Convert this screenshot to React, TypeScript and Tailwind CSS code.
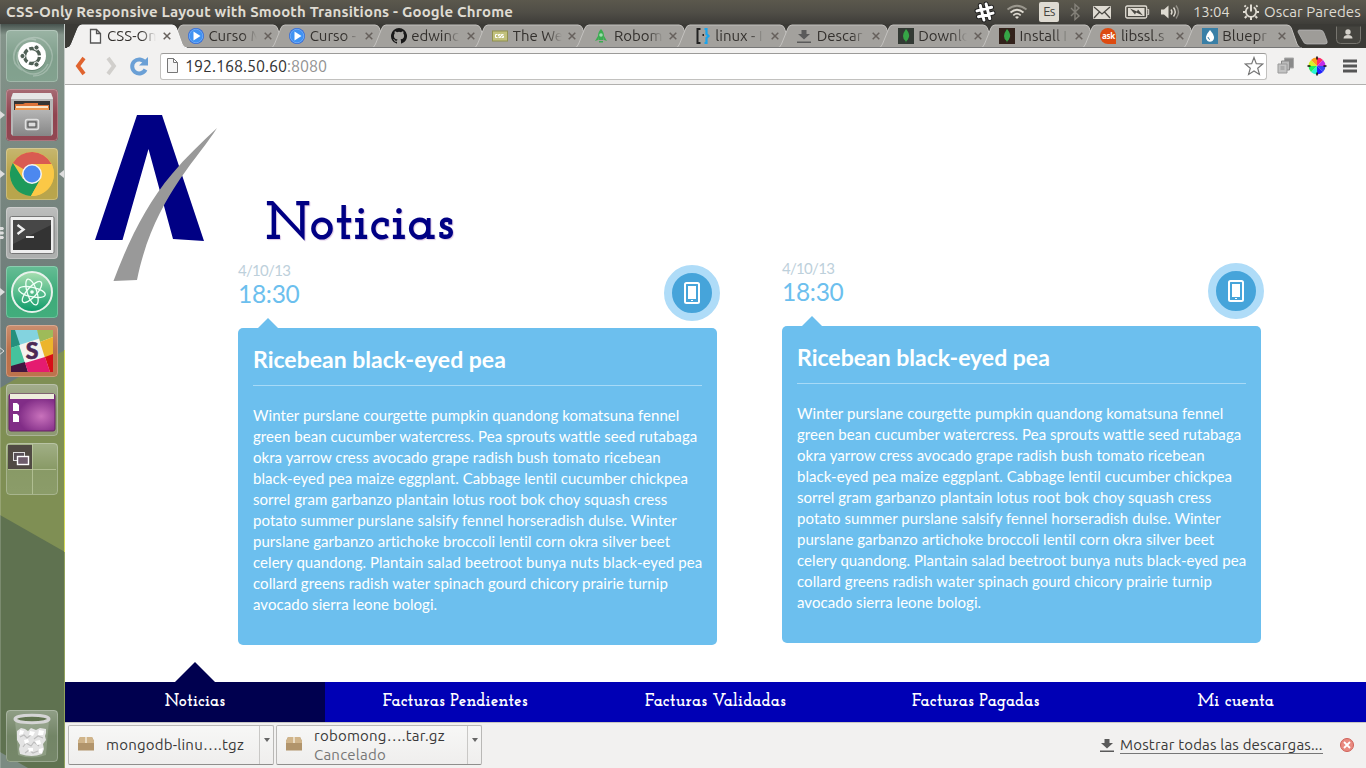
import React from "react";

const ui = "font-['Ubuntu','Noto_Sans',sans-serif]";
const slab = "font-['Josefin_Slab','Liberation_Serif',serif]";

/* ---------- system bar ---------- */

function SystemBar() {
  return (
    <header className="flex h-6 shrink-0 items-center justify-between bg-linear-to-b from-[#5b584d] via-[#504e47] to-[#3e3d39] px-[6px] text-[#dfdbd2]">
      <span className="whitespace-nowrap text-[15px] leading-6 font-bold tracking-[0.17px]">
        CSS-Only Responsive Layout with Smooth Transitions - Google Chrome
      </span>
      <div className="-mr-[3px] flex items-center">
        <svg width="22" height="22" viewBox="0 0 22 22" className="mr-[10px]">
          <g fill="none" strokeLinecap="round" transform="rotate(-14 11 11)">
            <path d="M8 3.500v15M14 3.500v15M3.500 8h15M3.500 14h15" stroke="#222" strokeWidth="5" />
            <path d="M8 3.500v15M14 3.500v15M3.500 8h15M3.500 14h15" stroke="#fff" strokeWidth="3" />
          </g>
        </svg>
        <svg width="22" height="16" viewBox="0 0 22 16" className="mr-[11px]" fill="none" stroke="#dfdbd2" strokeWidth="1.700">
          <path d="M1.500 5.500Q11-2 20.500 5.500" opacity=".5" />
          <path d="M4.500 8.500Q11 3 17.500 8.500M7.300 11.300Q11 8 14.700 11.300" />
          <path d="m11 15-2-2q2-1.500 4 0z" fill="#dfdbd2" stroke="none" />
        </svg>
        <span className="mr-[10px] flex h-5 w-5 items-center justify-center rounded-[2px] bg-[#dfdbd2] text-[13px] tracking-[-0.6px] text-[#45443f]">
          Es
        </span>
        <svg width="12" height="18" viewBox="0 0 12 18" className="mr-[12px]" fill="none" stroke="#85827a" strokeWidth="1.400">
          <path d="m2 5 8 8-4 3.500V1.500L10 5l-8 8" />
        </svg>
        <svg width="18" height="13" viewBox="0 0 18 13" className="mr-[14px]">
          <rect width="18" height="13" rx="1" fill="#dfdbd2" />
          <path d="m1 1 8 7 8-7M1 12l5.500-6M17 12l-5.500-6" fill="none" stroke="#4b4943" strokeWidth="1.300" />
        </svg>
        <svg width="25" height="14" viewBox="0 0 25 14" className="mr-[11px]">
          <rect x=".7" y="1" width="21" height="12" rx="1.500" fill="none" stroke="#dfdbd2" strokeWidth="1.300" />
          <rect x="3" y="3" width="16.500" height="8" fill="#dfdbd2" />
          <path d="M22.500 4.500h1.200v5h-1.200" fill="none" stroke="#dfdbd2" />
          <path d="m5 3.500 7 3 1-2 5 6-7-3-1 2z" fill="#4b4943" />
        </svg>
        <svg width="20" height="16" viewBox="0 0 20 16" className="mr-[12px]" fill="none" stroke="#dfdbd2" strokeWidth="1.400">
          <path d="M0 5.500h3l4.500-4v13L3 10.500H0z" fill="#dfdbd2" stroke="none" />
          <path d="M10 5.500q2 2.500 0 5M12.500 3.500q3.500 4.500 0 9" />
          <path d="M15 1.500q5 6.500 0 13" opacity=".45" />
        </svg>
        <span className="mr-[13px] w-[36px] text-[15px] tracking-[-0.2px]">13:04</span>
        <svg width="18" height="18" viewBox="0 0 18 18" className="mr-[4px]" fill="none" stroke="#dfdbd2">
          <path d="M6.300 4.300a5.200 5.200 0 1 0 5.400 0" strokeWidth="1.800" />
          <path d="M9 1.500v7" strokeWidth="2" />
          <path d="M3.800 3.800 2.500 2.500M14.200 3.800l1.300-1.300M1 9h2.500M14.500 9H17M2.800 15l1.800-1.800M15.200 15l-1.800-1.800M9 14v3" strokeWidth="2" />
        </svg>
        <span className="w-[99px] whitespace-nowrap text-[15px] tracking-[0.06px]">Oscar Paredes</span>
      </div>
    </header>
  );
}

/* ---------- launcher ---------- */

function UbuntuIcon() {
  return (
    <>
      <g fill="none" stroke="#fff" strokeWidth="1.500" opacity=".25">
        <path d="M9 34C2 13 30-3 43 16c8 12 0 30-16 30M16 40C-2 30 12 4 30 10M42 34c-10 20-36 7-30-12" />
      </g>
      <circle cx="26" cy="27" r="14" fill="#476353" opacity=".5" />
      <circle cx="26" cy="26" r="14" fill="#fff" />
      <circle cx="26" cy="26" r="7.500" fill="none" stroke="#4f5f55" strokeWidth="3.300" strokeDasharray="13.700 2" strokeDashoffset="-1" />
      <g fill="#4f5f55" stroke="#fff" strokeWidth="1">
        <circle cx="16.500" cy="26" r="2.600" />
        <circle cx="30.500" cy="17.500" r="2.600" />
        <circle cx="30.500" cy="34.500" r="2.600" />
      </g>
    </>
  );
}

function FilesIcon() {
  return (
    <>
      <path d="M7 4h38l2 5v36l-2 2H7l-2-2V9z" fill="#b7b7b7" />
      <path d="M7 4h38l2 6H5z" fill="#e6e6e6" />
      <path d="M8 12h36v12H8z" fill="#343434" />
      <path d="M9 15h8l2-1h13v2h11v8H9z" fill="#dc7339" />
      <path d="M10 17h32v2H10z" fill="#f8e6cc" />
      <path d="M9 19h34v3H9z" fill="#ed9851" />
      <path d="M7 21h38v26H7z" fill="url(#drawer)" />
      <rect x="19.500" y="30.500" width="13" height="10" rx="2" fill="#a4a4a4" stroke="#e0e0e0" strokeWidth="1.500" />
      <rect x="22" y="33" width="8" height="5" fill="#ddd" stroke="#444" />
    </>
  );
}

function ChromeIcon() {
  return (
    <>
      <circle cx="26" cy="26" r="22" fill="#f6c443" />
      <path d="M26 26 6.900 15A22 22 0 0 1 45.500 16H26z" fill="#d95b51" />
      <path d="M6.900 15A22 22 0 0 0 25 48l9.500-17L17 31z" fill="#1d9a5b" />
      <path d="M26 16h19.500A22 22 0 0 1 25 48l9.500-17z" fill="#fbc846" />
      <circle cx="26" cy="26" r="10" fill="#f4f4f4" />
      <circle cx="26" cy="26" r="8.500" fill="#4c88ef" />
    </>
  );
}

function TerminalIcon() {
  return (
    <>
      <rect x="4" y="9.500" width="44" height="37" rx="1.500" fill="#eee" stroke="#777" />
      <rect x="7" y="13" width="38" height="30" fill="#333" />
      <path d="M7 13h38v5L7 37z" fill="#555" opacity=".6" />
      <path d="m11.500 18 6 4.500-6 4.500" fill="none" stroke="#eee" strokeWidth="2.400" />
      <path d="M20 30h8" stroke="#eee" strokeWidth="2.200" />
    </>
  );
}

function AtomIcon() {
  return (
    <>
      <circle cx="26" cy="26" r="20" fill="url(#atom)" stroke="#e8f2ec" strokeWidth="2" />
      <g fill="none" stroke="#effff6" strokeWidth="1.300">
        <ellipse cx="26" cy="26" rx="13.500" ry="4.800" transform="rotate(12 26 26)" />
        <ellipse cx="26" cy="26" rx="13.500" ry="4.800" transform="rotate(72 26 26)" />
        <ellipse cx="26" cy="26" rx="13.500" ry="4.800" transform="rotate(132 26 26)" />
      </g>
      <circle cx="26" cy="26" r="1.800" fill="#effff6" />
    </>
  );
}

function SlackIcon() {
  return (
    <>
      <path d="M5 5h42v42H5z" fill="#f5f3ef" />
      <path d="M8 5h23l4 8-22 7z" fill="#83d3df" />
      <path d="M31 5h16v7l-13 5z" fill="#9ebb59" />
      <path d="M5 5h4l5 15-9 3z" fill="#258f7c" />
      <path d="m34 17 13-5v18l-8 3z" fill="#ecb52c" />
      <path d="m5 23 8-3 6 18-14 4z" fill="#45c39d" />
      <path d="m5 41 14-4 3 10H5z" fill="#421540" />
      <path d="m19 38 20-6 5 15H22z" fill="#e51b70" />
      <path d="m39 32 8-3v18h-3z" fill="#d70e17" />
      <text x="26" y="34" textAnchor="middle" fontFamily="Lato, sans-serif" fontWeight="900" fontSize="23" fill="#4d2955" stroke="#4d2955" strokeWidth=".6">
        S
      </text>
    </>
  );
}

function DesktopIcon() {
  return (
    <>
      <rect x="3" y="10" width="46" height="37" rx="2" fill="url(#desk)" stroke="#652263" />
      <path d="M4 10h44v5H4z" fill="#eeeedd" />
      <path d="M7 19h4l2 2v6H7zM7 30h4l2 2v6H7z" fill="#fff" />
    </>
  );
}

function WorkspaceIcon() {
  return (
    <>
      <path d="M2 2h24v24H2z" fill="#504a43" />
      <path d="M26.500 1v50M2 26.500h48" stroke="#cad5ad" strokeOpacity=".6" />
      <rect x="7.500" y="9.500" width="11" height="8" fill="#595159" stroke="#ddd" />
      <rect x="11.500" y="13.500" width="11" height="8" fill="#6e5d6c" stroke="#fff" strokeWidth="1.400" />
    </>
  );
}

function TrashIcon() {
  return (
    <>
      <path d="m9 10 3 35q14 5 28 0l3-35z" fill="#bdc8b7" opacity=".35" />
      <path d="m11 21 4-3 4 1 3 2 3-3 5 2 4-2 6 1 0 4-1 3 1 4-3 4 1 5-2 5q-10 4-22 0l-1-5 1-4-3-5z" fill="#e4e4e4" />
      <path d="m14 27 4-2 3 3 4-3M28 29l4-3 5 2M17 37l3-4 5 3 3-4 5 4M19 43l4-3 4 3 5-2" fill="none" stroke="#bdbdbd" strokeWidth="1.200" />
      <path d="m14 20 4 1-1 3-4 1zM24 21l5 1-2 4-4-1zM33 20l5 1-1 4-5 0zM18 30l4-1 1 3-4 2zM29 31l5-1 1 4-4 1zM22 38l5 0 0 3-4 1zM33 39l4-1-1 5-3 0z" fill="#fff" />
      <ellipse cx="26" cy="9" rx="17" ry="3.700" fill="#60734f" stroke="#d5d5d5" strokeWidth="3" />
    </>
  );
}

const launcherItems = [
  { tile: "bg-[#7b9c88]", icon: <UbuntuIcon /> },
  { tile: "bg-[#8b3c48]", icon: <FilesIcon />, mark: "full" },
  { tile: "bg-[#b5a042]", icon: <ChromeIcon />, mark: "focus" },
  { tile: "bg-[#a8aaa9]", icon: <TerminalIcon />, mark: "three" },
  { tile: "bg-[#36a874]", icon: <AtomIcon />, mark: "full" },
  { tile: "bg-[#b96b42]", icon: <SlackIcon />, mark: "hollow" },
  { tile: "bg-[#87946a]", icon: <DesktopIcon /> },
  { tile: "bg-[#849660]", icon: <WorkspaceIcon /> },
];

function Tile({ tile, icon, mark }: { tile: string; icon: React.ReactNode; mark?: string }) {
  return (
    <div className="relative flex h-[52px] w-full shrink-0 pl-[6px]">
      <div className={`h-[52px] w-[52px] overflow-hidden rounded-[4px] ${tile}`}>
        <svg width="52" height="52" viewBox="0 0 52 52">
          <rect width="52" height="52" fill="url(#gloss)" />
          {icon}
          <rect x=".5" y=".5" width="51" height="51" rx="3.500" fill="none" stroke="#fff" strokeOpacity=".25" />
        </svg>
      </div>
      {mark && (
        <svg className="absolute top-0 left-0" width="64" height="52" viewBox="0 0 64 52" fill="#dedede">
          {(mark === "full" || mark === "focus") && <path d="m0 22 5 4-5 4z" />}
          {mark === "focus" && <path d="m64 22-5 4 5 4z" />}
          {mark === "hollow" && <path d="m-1 22 5 4-5 4" fill="none" stroke="#ddd" />}
          {mark === "three" && <path d="M0 20h3l1 1.500-1 1.500H0zM0 24.500h3L4 26l-1 1.500H0zM0 29h3l1 1.500L3 32H0z" />}
        </svg>
      )}
    </div>
  );
}

function Launcher() {
  return (
    <aside className="relative flex w-[65px] shrink-0 flex-col justify-between pt-[6px] pb-[6px]">
      <svg className="absolute inset-0" width="65" height="744" viewBox="0 24 65 744">
        <defs>
          <linearGradient id="sky" x1="0" y1="0" x2="0" y2="1">
            <stop offset="0" stopColor="#46524e" />
            <stop offset=".03" stopColor="#84948a" />
            <stop offset=".6" stopColor="#73817c" />
            <stop offset="1" stopColor="#6b7b7c" />
          </linearGradient>
          <linearGradient id="gloss" x1="0" y1="0" x2="0" y2="1">
            <stop offset="0" stopColor="#fff" stopOpacity=".24" />
            <stop offset=".5" stopColor="#fff" stopOpacity=".04" />
            <stop offset="1" stopColor="#fff" stopOpacity=".06" />
          </linearGradient>
          <linearGradient id="drawer" x1="0" y1="0" x2="0" y2="1">
            <stop offset="0" stopColor="#b5b5b5" />
            <stop offset="1" stopColor="#868686" />
          </linearGradient>
          <linearGradient id="atom" x1="0" y1="0" x2="0" y2="1">
            <stop offset="0" stopColor="#a8dfb1" />
            <stop offset="1" stopColor="#0c9a69" />
          </linearGradient>
          <radialGradient id="desk" cx=".7" cy=".6">
            <stop offset="0" stopColor="#c972bc" />
            <stop offset="1" stopColor="#812d87" />
          </radialGradient>
        </defs>
        <rect y="24" width="65" height="744" fill="#7f8f54" />
        <path d="M0 24h65v326L0 388z" fill="url(#sky)" />
        <path d="m0 515 65 37v216H0z" fill="#5f7250" />
        <path d="m0 752 28 16H0z" fill="#7b8b82" />
        <path d="M.5 24v744" stroke="#fff" strokeOpacity=".18" />
        <path d="M64.500 24v326" stroke="#c5cbc8" />
        <path d="M64.500 350v202" stroke="#d3d95a" />
        <path d="M64.500 552v216" stroke="#91a15d" />
      </svg>
      <div className="flex flex-col gap-[7px]">
        {launcherItems.map((item, i) => (
          <Tile key={i} {...item} />
        ))}
      </div>
      <Tile tile="bg-[#6d8060]" icon={<TrashIcon />} />
    </aside>
  );
}

/* ---------- browser chrome ---------- */

const PlayIcon = (
  <>
    <circle cx="8" cy="8" r="8" fill="#2f6ada" />
    <circle cx="8" cy="8" r="6.800" fill="#3f92f2" stroke="#7db5f7" strokeWidth=".8" />
    <path d="m5.500 3.500 7 4.500-7 4.500z" fill="#fff" />
  </>
);
const DownloadGlyph = <path d="M5.500 2h5v4H14l-6 5.500L2 6h3.500zM1 13.500h14V15H1z" fill="#5a5a5a" />;
const leaf = <path d="M8 1q4 4.500 3 8-1 3-2.600 4L8 15l-.4-2Q5 11.500 5 8q0-3 3-7" fill="#36a546" />;

const tabs: { title: string; icon: React.ReactNode }[] = [
  { title: "CSS-On", icon: <path d="M3.500 1.500h6l4 4v9.500h-10zM9.500 1.500v4h4" fill="#f8f8f8" stroke="#555" strokeWidth="1.300" /> },
  { title: "Curso M", icon: PlayIcon },
  { title: "Curso -", icon: PlayIcon },
  {
    title: "edwinc",
    icon: (
      <path d="M8 0a8 8 0 0 0-2.530 15.590c.4.070.55-.17.55-.380v-1.490c-2.230.48-2.700-.95-2.700-.95-.36-.92-.89-1.170-.89-1.170-.73-.5.060-.49.060-.49.800.06 1.230.83 1.230.83.71 1.220 1.870.87 2.330.66.070-.52.280-.87.500-1.070-1.780-.2-3.640-.89-3.640-3.950 0-.87.310-1.590.82-2.150-.08-.2-.36-1.020.080-2.120 0 0 .67-.21 2.200.82a7.600 7.600 0 0 1 4 0c1.530-1.040 2.200-.82 2.200-.82.44 1.100.16 1.920.080 2.120.51.56.82 1.270.82 2.150 0 3.070-1.870 3.750-3.650 3.950.29.250.54.730.54 1.480v2.200c0 .21.150.46.550.38A8 8 0 0 0 8 0" fill="#181818" />
    ),
  },
  {
    title: "The We",
    icon: (
      <>
        <rect x=".5" y="3" width="15" height="10" fill="#c2c17d" stroke="#90904f" />
        <path d="M5.500 6.500h-2v3h2m3-3h-2v1.500h2v1.500h-2m5-3h-2v1.500h2v1.500h-2" fill="none" stroke="#fff" />
      </>
    ),
  },
  {
    title: "Robom",
    icon: (
      <>
        <path d="M8 1c4 4 3 8 2.500 11h-5C5 9 4 5 8 1M5 8l-3 5 3-1zM11 8l3 5-3-1zM6 13h4v1.500H6z" fill="#3aad50" />
        <circle cx="8" cy="7" r="1.800" fill="#a0ddb0" />
      </>
    ),
  },
  {
    title: "linux - I",
    icon: (
      <>
        <path d="M5.500 1H2.500v14h3" fill="none" stroke="#222" strokeWidth="2" />
        <path d="M7.500 6h1.500v2H7.500z" fill="#222" />
        <path d="M9.500 1h2v5l2 2-2 2v5h-2" fill="none" stroke="#1aa4ed" strokeWidth="2.200" />
      </>
    ),
  },
  { title: "Descar", icon: DownloadGlyph },
  { title: "Downlo", icon: <><path d="M0 0h16v16H0z" fill="#333a34" />{leaf}</> },
  { title: "Install I", icon: <><path d="M0 0h16v16H0z" fill="#33221b" />{leaf}</> },
  { title: "libssl.s", icon: "ask" },
  { title: "Bluepr", icon: <><path d="M0 0h16v16H0z" fill="#397fa6" /><path d="M8 2q6.500 7.500 2.500 11-2.500 1.500-5 0Q1.500 9.500 8 2" fill="#fff" /><path d="M6 9q0 2 2 2.500" stroke="#397fa6" fill="none" /></> },
];

function Tab({ title, icon, active }: { title: string; icon: React.ReactNode; active: boolean }) {
  return (
    <div className={`relative flex w-[101.4px] shrink-0 items-center pl-[19.500px] ${active ? "z-10" : ""}`}>
      <svg className="absolute top-0 left-0 h-6 w-[120px]" viewBox="0 0 120 24">
        <path
          d="M0 24q3 0 4.500-4L11 4q1.200-3 4-3h90q3 0 4.300 3l5.700 16q1.500 4 5 4z"
          fill={active ? "#f2f1f0" : "#a3a19d"}
        />
        <path
          d="M0 24q3 0 4.500-4L11 4q1.200-3 4-3h90q3 0 4.300 3l5.700 16q1.500 4 5 4"
          fill="none"
          stroke={active ? "#fafafa" : "#c4c2bf"}
        />
        {!active && <path d="M0 23.500h120" stroke="#777" />}
      </svg>
      <div className="relative flex w-4 shrink-0">
        {icon === "ask" ? (
          <span className="flex h-4 w-4 items-center justify-center rounded-full rounded-br-none bg-[#dd4a10] font-['Noto_Sans'] text-[8px] leading-4 font-bold tracking-[-0.3px] text-white">
            ask
          </span>
        ) : (
          <svg width="16" height="16" viewBox="0 0 16 16" fill="none">
            {icon}
          </svg>
        )}
      </div>
      <span className="relative ml-[4.500px] w-[49px] shrink-0 overflow-hidden whitespace-nowrap text-[15px] leading-5 text-[#33302d] [mask-image:linear-gradient(90deg,black_70%,transparent)]">
        {title}
      </span>
      <svg className="relative ml-[6.500px] shrink-0" width="8" height="8" viewBox="0 0 8 8">
        <path d="m.7.7 6.600 6.600M7.300.7.7 7.300" stroke="#66605c" strokeWidth="1.500" />
      </svg>
    </div>
  );
}

function TabStrip() {
  return (
    <div className="flex h-6 shrink-0 bg-[#3b3a36] pl-[2px]">
      {tabs.map((t, i) => (
        <Tab key={i} {...t} active={i === 0} />
      ))}
      <svg width="82" height="24" viewBox="0 0 82 24" className="relative shrink-0">
        <path d="M15 6h21q3 0 4 3l3 8q1 3-2 3H23q-3 0-4-3L14 8q0-2 1-2z" fill="#9e9c98" stroke="#bbb" strokeWidth=".7" />
        <path d="M52.500 2.500v13q0 4 4 4h16q4 0 4-4v-13" fill="#45443f" stroke="#77756f" />
        <circle cx="64" cy="8" r="2.700" fill="#d5d2cb" />
        <path d="M59.500 14.500q0-3.500 4.500-3.500t4.500 3.500z" fill="#d5d2cb" />
      </svg>
    </div>
  );
}

const wheel = ["#ff2a6a", "#c02ce9", "#3647f2", "#2020ff", "#28f5d2", "#20f060", "#d6f12b", "#ff9d1c"];

function Toolbar() {
  return (
    <div className="flex h-[37px] shrink-0 items-center border-b border-[#b1b0ae] bg-[#f2f1f0] pr-[9px] pl-[8px]">
      <svg width="78" height="22" viewBox="0 0 78 22" className="mr-[9px] shrink-0">
        <path d="m11 3-6 8 6 8" fill="none" stroke="#e0642f" strokeWidth="3.800" />
        <path d="m35 3 6 8-6 8" fill="none" stroke="#d1cfcc" strokeWidth="3.800" />
        <path d="M72.500 14.500a7 7 0 1 1-.5-7" fill="none" stroke="#6ba0d6" strokeWidth="4" />
        <path d="M75 2v8.500h-9z" fill="#6ba0d6" />
      </svg>
      <div className="flex h-[27px] w-[1107px] shrink-0 items-center rounded-[3px] border border-[#c2c1bf] border-t-[#9c9b99] bg-white pr-[2px] pl-[3px]">
        <svg width="16" height="18" viewBox="0 0 16 18" className="mr-[5px]">
          <path d="M3.500 1.500h6l4 4v10h-10zM9.500 1.500v4h4" fill="#f6f6f6" stroke="#777" />
        </svg>
        <span className="grow text-[16px] text-[#333]">
          192.168.50.60<span className="text-[#929292]">:8080</span>
        </span>
        <svg width="20" height="20" viewBox="0 0 20 20">
          <path d="m10 1.500 2.300 6.200 6.400.3-5 4.200 1.700 6.200-5.400-3.500-5.400 3.500 1.700-6.200-5-4.200 6.400-.3z" fill="#fff" stroke="#777" strokeWidth="1.200" />
        </svg>
      </div>
      <svg width="18" height="18" viewBox="0 0 18 18" className="ml-[10px]">
        <path d="M7.500 1h9v10h-9z" fill="#8a8a8a" stroke="#aaa" />
        <path d="M4.500 4h8v9h-8z" fill="#bbb" stroke="#888" />
        <path d="M1 7h9v9H1z" fill="#c3c3c3" stroke="#999" />
        <path d="M3.500 9h4v4h-4z" fill="#aaa" />
      </svg>
      <svg width="20" height="20" viewBox="-10 -10 20 20" className="ml-[12px]">
        {wheel.map((c, i) => (
          <path key={c} d="M0 0V-8.500A8.500 8.500 0 0 1 6.010-6.010z" fill={c} transform={`rotate(${i * 45})`} />
        ))}
        <path d="M0-9.500v3M0 9.500v-3M-9.500 0h3M9.500 0h-3" stroke="#111" strokeWidth="1.600" />
      </svg>
      <svg width="14" height="14" viewBox="0 0 14 14" className="ml-auto">
        <path d="M0 2h14M0 7h14M0 12h14" stroke="#555" strokeWidth="2.800" />
      </svg>
    </div>
  );
}

/* ---------- page ---------- */

const lines = [
  "Winter purslane courgette pumpkin quandong komatsuna fennel",
  "green bean cucumber watercress. Pea sprouts wattle seed rutabaga",
  "okra yarrow cress avocado grape radish bush tomato ricebean",
  "black-eyed pea maize eggplant. Cabbage lentil cucumber chickpea",
  "sorrel gram garbanzo plantain lotus root bok choy squash cress",
  "potato summer purslane salsify fennel horseradish dulse. Winter",
  "purslane garbanzo artichoke broccoli lentil corn okra silver beet",
  "celery quandong. Plantain salad beetroot bunya nuts black-eyed pea",
  "collard greens radish water spinach gourd chicory prairie turnip",
  "avocado sierra leone bologi.",
];

function NewsItem() {
  return (
    <article className="w-[479px] shrink-0 font-['Lato',sans-serif]">
      <div className="flex h-[68px] justify-between">
        <div>
          <div className="h-[20px] text-[15px] leading-[21px] tracking-[-0.7px] text-[#bdd0db]">4/10/13</div>
          <div className="h-[28px] text-[24.500px] leading-[28px] tracking-[-0.3px] text-[#6cbfee]">18:30</div>
        </div>
        <div className="mt-[5px] -mr-[3px] flex h-14 w-14 items-center justify-center rounded-full border-8 border-[#afdcf8] bg-[#46a4da]">
          <svg width="16" height="22" viewBox="0 0 16 22">
            <rect x="1" y="1" width="14" height="20" rx="1.500" fill="none" stroke="#fff" strokeWidth="2" />
            <path d="M4 4h8v13H4zM7 18h2v1H7z" fill="#fff" />
          </svg>
        </div>
      </div>
      <div className="relative h-[317px] rounded-[5px] bg-[#6cbfee] px-[15px] text-white">
        <div className="absolute -top-[10px] left-5 h-[10px] w-5 bg-[#6cbfee] [clip-path:polygon(50%_0,100%_100%,0_100%)]" />
        <h2 className="mb-[19px] h-[58px] border-b border-[#a7daf7] pt-[14px] text-[23px] leading-[34px] font-bold whitespace-nowrap">
          Ricebean black-eyed pea
        </h2>
        {lines.map((l) => (
          <p key={l} className="text-[15px] leading-[21px] tracking-[0.05px] whitespace-nowrap">
            {l}
          </p>
        ))}
      </div>
    </article>
  );
}

const navItems = ["Noticias", "Facturas Pendientes", "Facturas Validadas", "Facturas Pagadas", "Mi cuenta"];

function Page() {
  return (
    <main className="flex min-h-0 grow flex-col bg-white">
      <div className="flex h-[175px] shrink-0 pt-[30px] pl-[30px]">
        <svg width="123" height="167" viewBox="0 0 123 167" className="shrink-0">
          <path d="M42 0h25l42 126-31-2L53.500 34 27.500 125H0z" fill="#000084" />
          <path d="M122 13C102 45 58 85 42 165l-23.500 1C33 127 52 88 77 59 91 42 107 27 122 13" fill="#999" />
        </svg>
        <h1 className={`mt-[75px] ml-[47px] h-[70px] text-[54px] leading-[72px] font-bold tracking-[0.25px] text-[#000084] [text-shadow:1px_1px_1px_#ddc8e4] ${slab}`}>
          Noticias
        </h1>
      </div>
      <div className="flex grow gap-[65px] pl-[173px]">
        <NewsItem />
        <div className="-mt-[2px]">
          <NewsItem />
        </div>
      </div>
      <nav className={`flex h-10 shrink-0 ${slab}`}>
        {navItems.map((n, i) => (
          <a
            key={n}
            className={`relative flex grow basis-0 items-center justify-center text-[17px] leading-none font-bold tracking-[0.17px] text-white ${i === 0 ? "bg-[#00004f]" : "bg-[#0000b5]"}`}
          >
            {i === 0 && (
              <span className="absolute -top-5 left-[110px] h-5 w-10 bg-[#00004f] [clip-path:polygon(50%_0,100%_100%,0_100%)]" />
            )}
            <span className="-mt-[2px]">{n}</span>
          </a>
        ))}
      </nav>
    </main>
  );
}

/* ---------- downloads ---------- */

function Download({ name, status }: { name: string; status?: string }) {
  return (
    <div className="flex h-[40px] w-[206px] rounded-[2px] border border-[#b9b8b6] border-b-[#8f8e8c] bg-linear-to-b from-[#f7f7f6] to-[#efeeed]">
      <div className="flex grow items-center pl-[9px]">
        <svg width="16" height="14" viewBox="0 0 16 14" className="mr-[12px] -mt-[3px] shrink-0">
          <path d="M2 0h12l2 4v9.500H0V4z" fill="#b1946b" />
          <path d="M2 0h12l2 4v2H0V4z" fill="#d0b48a" />
          <path d="M7 0h2v6H7z" fill="#eadcc4" />
        </svg>
        <div className="-mt-[1px] text-[15px] leading-[19px] tracking-[0.22px] whitespace-nowrap text-[#393939]">
          <div>{name}</div>
          {status && <div className="text-[#777]">{status}</div>}
        </div>
      </div>
      <div className="flex w-[14px] justify-center border-l border-[#c9c8c6] pt-[12px]">
        <svg width="6" height="4" viewBox="0 0 6 4">
          <path d="M0 0h6L3 4z" fill="#666" />
        </svg>
      </div>
    </div>
  );
}

function DownloadShelf() {
  return (
    <footer className="flex h-[46px] shrink-0 items-start gap-[2px] border-t border-[#c7c6c3] bg-[#f2f1f0] pt-[2px] pr-[12px] pl-[3px]">
      <Download name="mongodb-linu….tgz" />
      <Download name="robomong….tar.gz" status="Cancelado" />
      <div className="ml-auto flex h-[40px] items-center">
        <svg width="14" height="13" viewBox="1 2 14 13" className="mr-[6px]">
          {DownloadGlyph}
        </svg>
        <a className="mr-[17px] w-[203px] border-b border-[#777] text-[15px] leading-[16px] tracking-[0.18px] whitespace-nowrap text-[#393939]">
          Mostrar todas las descargas...
        </a>
        <svg width="14" height="14" viewBox="0 0 14 14">
          <circle cx="7" cy="7" r="6.500" fill="#e98a80" stroke="#cf6058" />
          <path d="m4 4 6 6M10 4l-6 6" stroke="#fff" strokeWidth="1.800" />
        </svg>
      </div>
    </footer>
  );
}

export default function App() {
  return (
    <div className={`flex h-[768px] w-[1366px] flex-col overflow-hidden bg-white ${ui}`}>
      <SystemBar />
      <div className="flex min-h-0 grow">
        <Launcher />
        <div className="flex w-[1301px] flex-col">
          <TabStrip />
          <Toolbar />
          <Page />
          <DownloadShelf />
        </div>
      </div>
    </div>
  );
}
